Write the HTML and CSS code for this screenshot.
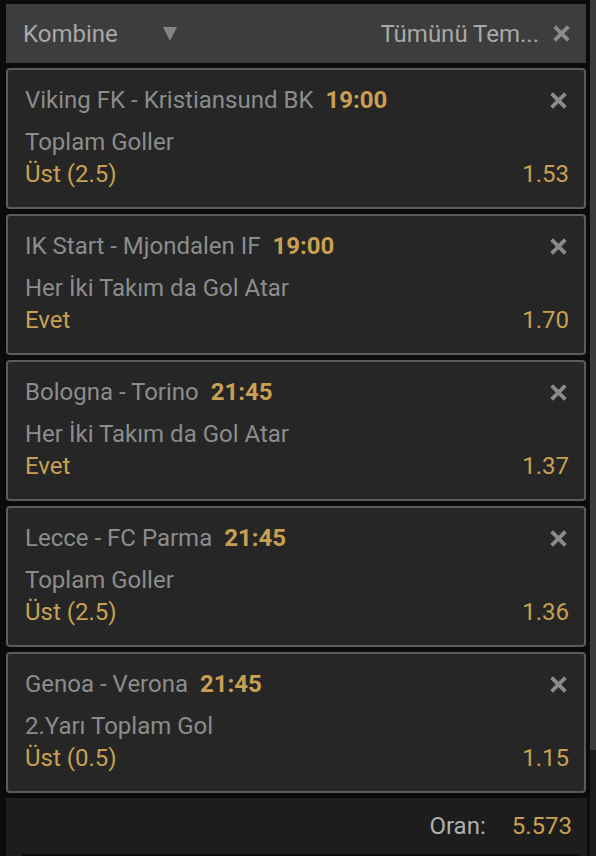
FILE: index.html
```html
<!DOCTYPE html>
<html lang="tr">
<head>
    <meta charset="UTF-8">
    <meta name="viewport" content="width=device-width, initial-scale=1.0">
    <title>Kupon</title>
    <link rel="stylesheet" href="styles.css">
</head>
<body>
    <div class="frame">
        <div class="slip">
            <div class="slip-header">
                <div class="type-select">
                    <span>Kombine</span>
                    <span class="caret"></span>
                </div>
                <div class="clear-all">
                    <span class="clear-label">Tümünü Tem...</span>
                    <svg class="close" viewBox="0 0 18 18"><path d="M2.5 2.5 L15.5 15.5 M15.5 2.5 L2.5 15.5"/></svg>
                </div>
            </div>

            <div class="bet">
                <div class="bet-top">
                    <div class="match">Viking FK - Kristiansund BK <b class="time">19:00</b></div>
                    <svg class="close" viewBox="0 0 18 18"><path d="M2.5 2.5 L15.5 15.5 M15.5 2.5 L2.5 15.5"/></svg>
                </div>
                <div class="market">Toplam Goller</div>
                <div class="pick"><span>Üst (2.5)</span><span>1.53</span></div>
            </div>

            <div class="bet">
                <div class="bet-top">
                    <div class="match">IK Start - Mjondalen IF <b class="time">19:00</b></div>
                    <svg class="close" viewBox="0 0 18 18"><path d="M2.5 2.5 L15.5 15.5 M15.5 2.5 L2.5 15.5"/></svg>
                </div>
                <div class="market">Her İki Takım da Gol Atar</div>
                <div class="pick"><span>Evet</span><span>1.70</span></div>
            </div>

            <div class="bet">
                <div class="bet-top">
                    <div class="match">Bologna - Torino <b class="time">21:45</b></div>
                    <svg class="close" viewBox="0 0 18 18"><path d="M2.5 2.5 L15.5 15.5 M15.5 2.5 L2.5 15.5"/></svg>
                </div>
                <div class="market">Her İki Takım da Gol Atar</div>
                <div class="pick"><span>Evet</span><span>1.37</span></div>
            </div>

            <div class="bet">
                <div class="bet-top">
                    <div class="match">Lecce - FC Parma <b class="time">21:45</b></div>
                    <svg class="close" viewBox="0 0 18 18"><path d="M2.5 2.5 L15.5 15.5 M15.5 2.5 L2.5 15.5"/></svg>
                </div>
                <div class="market">Toplam Goller</div>
                <div class="pick"><span>Üst (2.5)</span><span>1.36</span></div>
            </div>

            <div class="bet">
                <div class="bet-top">
                    <div class="match">Genoa - Verona <b class="time">21:45</b></div>
                    <svg class="close" viewBox="0 0 18 18"><path d="M2.5 2.5 L15.5 15.5 M15.5 2.5 L2.5 15.5"/></svg>
                </div>
                <div class="market">2.Yarı Toplam Gol</div>
                <div class="pick"><span>Üst (0.5)</span><span>1.15</span></div>
            </div>

            <div class="slip-footer">
                <div class="total">
                    <span class="total-label">Oran:</span>
                    <span class="total-value">5.573</span>
                </div>
                <div class="stake-box"></div>
            </div>
        </div>
        <div class="scrollbar">
            <div class="thumb"></div>
        </div>
    </div>
</body>
</html>
```

FILE: styles.css
```css
body {
    margin: 0;
    background-color: #0b0b0b;
    font-family: Roboto, "Noto Sans", Arial, sans-serif;
    font-size: 24px;
    height: 856px;
    overflow: hidden;
}
.frame {
    display: flex;
    height: 856px;
}
.slip {
    width: 582px;
    padding: 4px 2px 0 6px;
    display: flex;
    flex-direction: column;
    gap: 5px;
}
.slip-header {
    height: 59px;
    flex-shrink: 0;
    background-color: #3d3d3d;
    display: flex;
    align-items: center;
    justify-content: space-between;
    padding: 0 15px 0 17px;
    line-height: 28px;
}
.type-select {
    display: flex;
    align-items: center;
    color: #a8a8a8;
}
.caret {
    width: 0;
    height: 0;
    margin-left: 45px;
    border-left: 7.5px solid transparent;
    border-right: 7.5px solid transparent;
    border-top: 14px solid #858585;
}
.clear-all {
    display: flex;
    align-items: center;
    color: #a8a8a8;
}
.clear-label {
    white-space: nowrap;
    margin-right: 13px;
}
.close {
    width: 19px;
    height: 19px;
    flex-shrink: 0;
}
.close path {
    stroke: #8a8a8a;
    stroke-width: 3.6;
    fill: none;
}
.bet {
    height: 141px;
    flex-shrink: 0;
    box-sizing: border-box;
    background-color: #262626;
    border: 2px solid #5c5c5c;
    border-radius: 4px;
    padding: 16px 15px 0 17px;
}
.bet-top {
    display: flex;
    justify-content: space-between;
    align-items: center;
    height: 28px;
    line-height: 28px;
}
.bet-top .close {
    margin-right: 1px;
}
.match {
    color: #8c8c8c;
    white-space: nowrap;
}
.time {
    color: #c9a052;
    font-weight: bold;
    margin-left: 6px;
}
.market {
    color: #8c8c8c;
    margin-top: 13px;
    line-height: 30px;
}
.pick {
    display: flex;
    justify-content: space-between;
    color: #c9a052;
    line-height: 34px;
}
.slip-footer {
    flex: 1;
    background-color: #1d1d1d;
    margin-right: -1px;
    display: flex;
    flex-direction: column;
}
.total {
    display: flex;
    justify-content: flex-end;
    align-items: center;
    height: 56px;
    padding-right: 15px;
    gap: 26px;
}
.total-label {
    color: #b0b0b0;
}
.total-value {
    color: #c9a052;
}
.stake-box {
    margin-left: 16px;
    margin-right: 8px;
    flex: 1;
    background-color: #0b0b0b;
}
.scrollbar {
    margin-left: 2px;
    width: 6px;
    background-color: #1c1c1c;
}
.thumb {
    height: 750px;
    background-color: #3b3b3b;
}
```
